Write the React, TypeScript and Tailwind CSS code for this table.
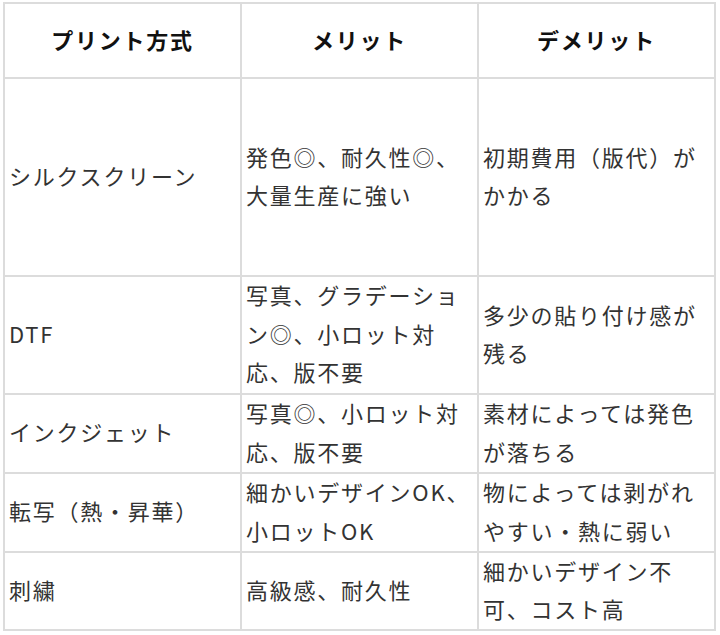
import React from "react";

interface Row {
  method: string;
  merit: string[];
  demerit: string[];
}

const rows: Row[] = [
  {
    method: "シルクスクリーン",
    merit: ["発色◎、耐久性◎、", "大量生産に強い"],
    demerit: ["初期費用（版代）が", "かかる"],
  },
  {
    method: "DTF",
    merit: ["写真、グラデーショ", "ン◎、小ロット対", "応、版不要"],
    demerit: ["多少の貼り付け感が", "残る"],
  },
  {
    method: "インクジェット",
    merit: ["写真◎、小ロット対", "応、版不要"],
    demerit: ["素材によっては発色", "が落ちる"],
  },
  {
    method: "転写（熱・昇華）",
    merit: ["細かいデザインOK、", "小ロットOK"],
    demerit: ["物によっては剥がれ", "やすい・熱に弱い"],
  },
  {
    method: "刺繍",
    merit: ["高級感、耐久性"],
    demerit: ["細かいデザイン不", "可、コスト高"],
  },
];

const Lines = ({ lines }: { lines: string[] }) => (
  <div>
    {lines.map((l, i) => (
      <div key={i} className="whitespace-nowrap">
        {l}
      </div>
    ))}
  </div>
);

export default function App() {
  return (
    <div
      className="min-h-screen bg-white pt-[2px] pl-[3px]"
      style={{ fontFamily: '"Noto Sans CJK JP", "Noto Sans", sans-serif' }}
    >
      <div className="grid w-[713px] grid-cols-[235px_235px_235px] grid-rows-[73px_196px_116px_77px_77px_76px] gap-[2px] bg-[#dcdcdc] p-[2px] text-[22px] leading-[38.5px] tracking-[0.08em] text-[#333]">
        {["プリント方式", "メリット", "デメリット"].map((h) => (
          <div
            key={h}
            className="flex items-center justify-center bg-white pb-[2px] font-bold text-[#111]"
          >
            {h}
          </div>
        ))}
        {rows.map((r) => (
          <React.Fragment key={r.method}>
            <div className="flex items-center bg-white px-[4px] pb-[4px]">
              {r.method}
            </div>
            <div className="flex items-center bg-white px-[4px] pb-[4px]">
              <Lines lines={r.merit} />
            </div>
            <div className="flex items-center bg-white px-[4px] pb-[4px]">
              <Lines lines={r.demerit} />
            </div>
          </React.Fragment>
        ))}
      </div>
    </div>
  );
}
